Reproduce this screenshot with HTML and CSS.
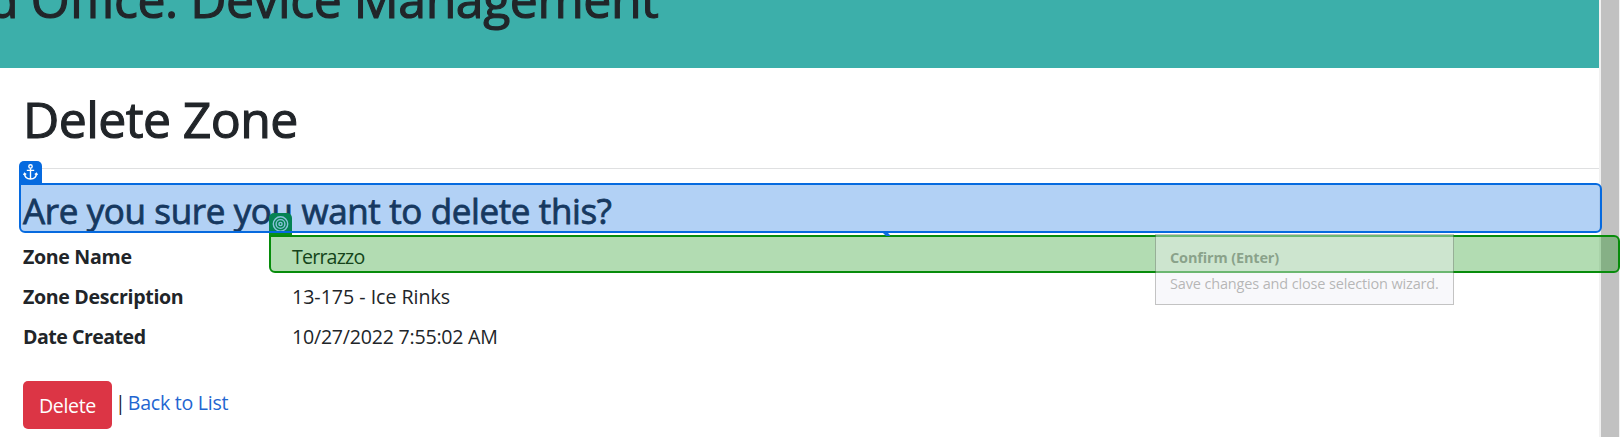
FILE: index.html
```html
<!DOCTYPE html>
<html lang="en">
<head>
<meta charset="utf-8">
<title>Delete Zone</title>
<link rel="stylesheet" href="styles.css">
</head>
<body>
<div class="window">
  <div class="page">
    <header class="banner"><div class="banner-title">d Office. Device Management</div></header>
    <main class="content">
      <h1 class="title">Delete Zone</h1>
      <hr class="rule">
      <h2 class="question">Are you sure you want to delete this?</h2>
      <dl class="details">
        <dt class="term">Zone Name</dt><dd class="value v-name">Terrazzo</dd>
        <dt class="term">Zone Description</dt><dd class="value v-desc">13-175 - Ice Rinks</dd>
        <dt class="term date">Date Created</dt><dd class="value v-date">10/27/2022 7:55:02 AM</dd>
      </dl>
      <div class="actions">
        <button class="delete">Delete</button>
        <span class="divider">|</span>
        <a class="back">Back to List</a>
      </div>
    </main>
  </div>
  <div class="scrollbar"><div class="thumb"></div></div>
</div>
<div class="target-tab">
  <svg width="23" height="22" viewBox="0 0 23 22" fill="none" stroke="#c4ead9" stroke-width="1.4"><circle cx="11.5" cy="11" r="7.2"/><circle cx="11.5" cy="11" r="4.4"/><circle cx="11.5" cy="11" r="1.6"/></svg>
</div>
<div class="anchor-box"></div>
<div class="anchor-tab">
  <svg width="23" height="22" viewBox="-0.5 0 23 22" fill="none" stroke="#fff" stroke-width="1.4"><circle cx="11" cy="5.4" r="1.7"/><path d="M11 7.2V18M7.3 9.4h7.4M4.9 12.2c.2 3.8 2.7 5.8 6.1 5.8s5.9-2 6.1-5.8M4.1 14l.9-1.8 1.7 1.3M17.9 14l-.9-1.8-1.7 1.3"/></svg>
</div>
<div class="target-box"></div>
<svg class="link-mark" width="8" height="3" viewBox="0 0 8 3"><path d="M0 0h5l2 2v1H3z" fill="#0a6ce0"/></svg>
<div class="tooltip">
  <div class="tip-title">Confirm (Enter)</div>
  <div class="tip-text">Save changes and close selection wizard.</div>
</div>
</body>
</html>
```
FILE: styles.css
```css
* { box-sizing: border-box; }
body {
  margin: 0;
  height: 437px;
  overflow: hidden;
  background: #fff;
  color: #212529;
  font-family: "Open Sans", "Noto Sans", sans-serif;
  font-size: 19.6px;
  white-space: nowrap;
}
.window { display: flex; height: 437px; overflow: hidden; }
.page { flex: 1; min-width: 0; }
.banner { height: 68px; background: #3cafaa; overflow: hidden; }
.banner-title {
  margin-top: -31px;
  margin-left: -12px;
  font-size: 50px;
  line-height: 60px;
  font-weight: 400;
  -webkit-text-stroke: 1.1px currentColor;
  letter-spacing: -0.47px;
}
.content { padding-left: 23px; }
.title {
  margin: 0;
  padding-top: 21px;
  height: 100px;
  font-size: 50px;
  line-height: 60px;
  font-weight: 400;
  -webkit-text-stroke: 1.1px currentColor;
  letter-spacing: -0.6px;
}
.rule { margin: 0 0 0 -1px; border: 0; height: 1px; background: #dfe0e1; }
.question {
  margin: 0;
  padding-top: 21px;
  height: 68px;
  font-size: 35px;
  line-height: 42px;
  font-weight: 400;
  -webkit-text-stroke: 0.8px currentColor;
  letter-spacing: -0.37px;
}
.details {
  display: grid;
  grid-template-columns: 269px 1fr;
  grid-auto-rows: 40px;
  margin: 0;
  height: 144px;
  line-height: 40px;
}
.term { font-weight: 700; letter-spacing: -0.33px; }
.date { letter-spacing: -0.52px; }
.value { margin: 0; }
.v-name { letter-spacing: -0.8px; }
.v-desc { letter-spacing: -0.02px; }
.v-date { letter-spacing: -0.23px; }
.actions { display: flex; }
.delete {
  width: 89px;
  height: 48px;
  margin-right: 3px;
  padding: 1px 0 0;
  border: 0;
  border-radius: 5px;
  background: #dc3545;
  color: #fff;
  font: inherit;
  letter-spacing: -0.35px;
}
.divider { line-height: 44px; margin-right: 2px; }
.back { line-height: 44px; color: #1f66d1; letter-spacing: -0.27px; }
.scrollbar { width: 21px; padding: 0 1px 0 2px; background: #f1f1f1; }
.thumb { height: 100%; background: #c1c1c1; }

.anchor-box, .target-box { position: absolute; border-radius: 0 6px 6px 6px; }
.anchor-box {
  left: 19px; top: 183px; width: 1583px; height: 50px;
  border: 2px solid #066adf;
  background: rgba(0, 103, 223, .3);
}
.target-box {
  left: 269px; top: 235px; width: 1351px; height: 38px;
  border: 2px solid #078c0b;
  background: rgba(0, 140, 0, .3);
}
.anchor-tab, .target-tab {
  position: absolute;
  width: 23px;
  height: 23px;
  border-radius: 5px 5px 0 0;
}
.anchor-tab { left: 19px; top: 161px; background: #066adf; }
.target-tab { left: 269px; top: 213px; background: #089018; }
.link-mark { position: absolute; left: 883px; top: 233px; }
.tooltip {
  position: absolute;
  left: 1155px;
  top: 234px;
  width: 299px;
  height: 71px;
  padding: 10px 14px;
  border: 1px solid #767676;
  background: #f1f1f7;
  color: #575757;
  opacity: .43;
  font-size: 14.5px;
  line-height: 26px;
  letter-spacing: -0.15px;
}
.tip-title { font-weight: 700; }
```
